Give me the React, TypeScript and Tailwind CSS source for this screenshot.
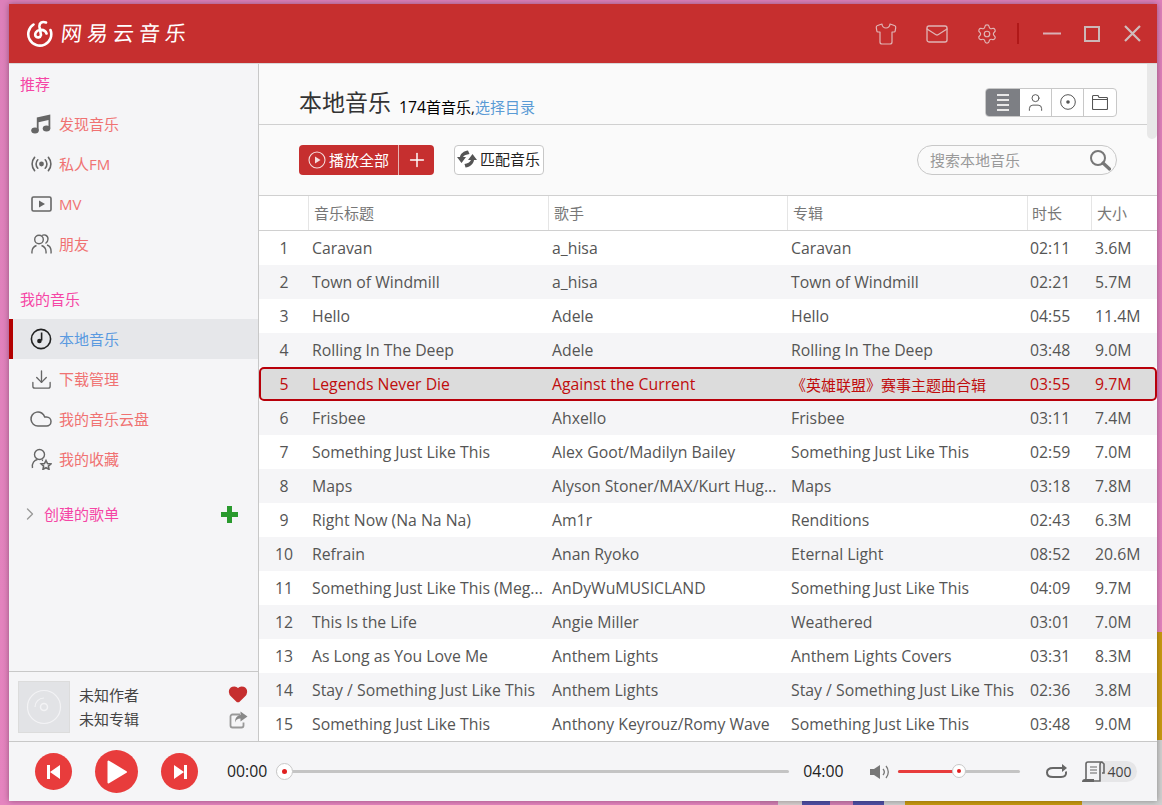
import { Shirt, Mail, Settings, Download, Cloud, ChevronRight, Plus, User, Heart } from "lucide-react";
import type { ReactNode } from "react";

const FONT = "font-['Open_Sans','Noto_Sans_CJK_SC',sans-serif]";

const songs = [
  ["Caravan", "a_hisa", "Caravan", "02:11", "3.6M"],
  ["Town of Windmill", "a_hisa", "Town of Windmill", "02:21", "5.7M"],
  ["Hello", "Adele", "Hello", "04:55", "11.4M"],
  ["Rolling In The Deep", "Adele", "Rolling In The Deep", "03:48", "9.0M"],
  ["Legends Never Die", "Against the Current", "《英雄联盟》赛事主题曲合辑", "03:55", "9.7M"],
  ["Frisbee", "Ahxello", "Frisbee", "03:11", "7.4M"],
  ["Something Just Like This", "Alex Goot/Madilyn Bailey", "Something Just Like This", "02:59", "7.0M"],
  ["Maps", "Alyson Stoner/MAX/Kurt Hug...", "Maps", "03:18", "7.8M"],
  ["Right Now (Na Na Na)", "Am1r", "Renditions", "02:43", "6.3M"],
  ["Refrain", "Anan Ryoko", "Eternal Light", "08:52", "20.6M"],
  ["Something Just Like This (Meg...", "AnDyWuMUSICLAND", "Something Just Like This", "04:09", "9.7M"],
  ["This Is the Life", "Angie Miller", "Weathered", "03:01", "7.0M"],
  ["As Long as You Love Me", "Anthem Lights", "Anthem Lights Covers", "03:31", "8.3M"],
  ["Stay / Something Just Like This", "Anthem Lights", "Stay / Something Just Like This", "02:36", "3.8M"],
  ["Something Just Like This", "Anthony Keyrouz/Romy Wave", "Something Just Like This", "03:48", "9.0M"],
];

const Note = () => (
  <svg width="20" height="20" viewBox="0 0 20 20" fill="#666">
    <ellipse cx="4" cy="16.500" rx="3.800" ry="3" />
    <ellipse cx="15.500" cy="14.500" rx="3.800" ry="3" />
    <path d="M5.800 16.500V3.500L19.300 .5v14h-1.800V6L7.600 8.200v8.300z" />
  </svg>
);

const Radio = () => (
  <svg width="21" height="18" viewBox="0 0 21 18" fill="none" stroke="#666" strokeWidth="1.600" strokeLinecap="round">
    <circle cx="10.500" cy="9" r="2.400" fill="#666" stroke="none" />
    <path d="M6.800 4.800a6 6 0 0 0 0 8.400M14.200 4.800a6 6 0 0 1 0 8.400M3.600 2.400a10 10 0 0 0 0 13.200M17.400 2.400a10 10 0 0 1 0 13.200" />
  </svg>
);

const Mv = () => (
  <svg width="21" height="16" viewBox="0 0 21 16" fill="none">
    <rect x="1" y="1" width="19" height="14" rx="1.500" stroke="#666" strokeWidth="1.600" />
    <path d="M8 4.500l6 3.500-6 3.500z" fill="#666" />
  </svg>
);

const Friends = () => (
  <svg width="21" height="20" viewBox="0 0 21 20" fill="none" stroke="#666" strokeWidth="1.400">
    <circle cx="8" cy="5.500" r="4.300" />
    <path d="M1 19.500c-.5-4.500 1.500-7 4.500-8M10.500 11.500c3 1 5 3.500 4.500 8" />
    <path d="M11 1.500c2-1.200 6-.6 6 3.500 0 2-1 3.500-2.500 4.500M16 11c3 1 4.500 4 4 8.500" />
  </svg>
);

const Clock = () => (
  <svg width="22" height="22" viewBox="0 0 22 22" fill="none" stroke="#222" strokeWidth="1.600">
    <circle cx="11" cy="11" r="9.600" />
    <path d="M11.600 4.500v8" />
    <circle cx="9.400" cy="13" r="2.300" fill="#222" stroke="none" />
  </svg>
);

const UserStar = () => (
  <svg width="21" height="22" viewBox="0 0 21 22" fill="none" stroke="#666" strokeWidth="1.400">
    <circle cx="8.500" cy="6.500" r="5" />
    <path d="M1.500 20c-1-5 2-8 5-8.500M11 12l1 .5" />
    <path d="M15 12.500l1.500 3 3.300.4-2.400 2.200.6 3.200-3-1.600-3 1.600.6-3.200-2.400-2.200 3.300-.4z" strokeWidth="1.600" />
  </svg>
);

const nav1 = [
  { label: "发现音乐", icon: <Note /> },
  { label: "私人FM", icon: <Radio /> },
  { label: "MV", icon: <Mv /> },
  { label: "朋友", icon: <Friends /> },
];

const nav2 = [
  { label: "下载管理", icon: <Download size={23} color="#666" strokeWidth={1.400} /> },
  { label: "我的音乐云盘", icon: <Cloud size={24} color="#666" strokeWidth={1.500} /> },
  { label: "我的收藏", icon: <UserStar /> },
];

function NavItem({ icon, label }: { icon: ReactNode; label: string }) {
  return (
    <div className="flex h-10 items-center">
      <div className="flex w-[50px] justify-end pr-[6px]">
        <div className="flex w-[24px] justify-center">{icon}</div>
      </div>
      <span className="text-[15px] text-[#f07272]">{label}</span>
    </div>
  );
}

function Sidebar() {
  return (
    <aside className="flex w-[250px] shrink-0 flex-col border-r border-[#c8c8c8] bg-[#f5f5f7]">
      <div className="flex-1">
        <div className="pl-[11px] pt-[9px] text-[15px] leading-[22px] text-[#f545a5]">推荐</div>
        <div className="mt-[9px]">
          {nav1.map((n) => (
            <NavItem key={n.label} label={n.label} icon={n.icon} />
          ))}
        </div>
        <div className="pl-[11px] pt-[24px] text-[15px] leading-[22px] text-[#f545a5]">我的音乐</div>
        <div className="mt-[9px] flex h-10 items-center border-l-[4px] border-[#b30000] bg-[#e6e7ea]">
          <div className="flex w-[46px] justify-end pr-[6px]">
            <div className="flex w-[24px] justify-center"><Clock /></div>
          </div>
          <span className="text-[15px] text-[#5a9ae0]">本地音乐</span>
        </div>
        {nav2.map((n) => (
          <NavItem key={n.label} label={n.label} icon={n.icon} />
        ))}
        <div className="mt-[15px] flex h-10 items-center pl-[11px] pr-[20px]">
          <ChevronRight size={20} color="#999" strokeWidth={1.600} className="mr-[4px]" />
          <span className="flex-1 text-[15px] text-[#f545a5]">创建的歌单</span>
          <svg width="17" height="17" viewBox="0 0 17 17" fill="#2a9a2e"><path d="M6 0h5v6h6v5h-6v6H6v-6H0V6h6z" /></svg>
        </div>
      </div>
      <div className="flex h-[70px] items-center border-t border-[#c8c8c8] pl-[9px] pr-[10px]">
        <div className="flex h-[52px] w-[52px] items-center justify-center border border-[#dcdcdc] bg-[#e2e3e6]">
          <svg width="36" height="36" viewBox="0 0 36 36" fill="none" stroke="#f3f3f5" strokeWidth="1.200">
            <circle cx="18" cy="18" r="16.500" />
            <circle cx="18" cy="18" r="3.500" strokeWidth="1.500" />
            <path d="M9 18a9 9 0 0 1 9-9" />
          </svg>
        </div>
        <div className="ml-[9px] flex-1 text-[15px] leading-[24px] text-[#444]">
          <div>未知作者</div>
          <div>未知专辑</div>
        </div>
        <div className="flex flex-col items-center gap-[7px]">
          <Heart size={20} fill="#c62f2f" color="#c62f2f" />
          <svg width="19" height="18" viewBox="0 0 19 18" fill="none">
            <path d="M11 3.500H3.500a2 2 0 0 0-2 2v9a2 2 0 0 0 2 2h9a2 2 0 0 0 2-2v-3" stroke="#999" strokeWidth="1.800" />
            <path d="M11.500 .5l7 5-7 5V7.500c-3 0-4.500 1-5.500 4 0-4.500 2-7 5.500-7.500z" fill="#888" />
          </svg>
        </div>
      </div>
    </aside>
  );
}

function Header() {
  return (
    <div className="bg-[#fafafa]">
      <div className="flex h-[61px] items-center border-b border-[#d0d0d0] pl-[40px] pr-[40px]">
        <span className="pt-[15px] text-[23px] leading-[32px] text-[#333]">本地音乐</span>
        <span className="ml-[8px] pt-[25px] text-[15px] leading-[24px] text-black"><span className="text-[15.800px]">174</span>首音乐,<span className="text-[#5a9bd5]">选择目录</span></span>
        <div className="mt-[16px] ml-auto flex h-[29px] w-[132px] overflow-hidden rounded-[4px] border border-[#c8c8c8] bg-white">
          <div className="flex w-[34px] items-center justify-center bg-[#7d7f84]">
            <div className="flex flex-col gap-[3px]">
              <div className="h-[2px] w-[12px] bg-[#e8e8e8]" />
              <div className="h-[2px] w-[12px] bg-[#e8e8e8]" />
              <div className="h-[2px] w-[12px] bg-[#e8e8e8]" />
              <div className="h-[2px] w-[12px] bg-[#e8e8e8]" />
            </div>
          </div>
          <div className="flex w-[32px] items-center justify-center border-r border-[#c8c8c8]">
            <User size={21} color="#555" strokeWidth={1.100} />
          </div>
          <div className="flex w-[32px] items-center justify-center border-r border-[#c8c8c8]">
            <svg width="16" height="16" viewBox="0 0 16 16" fill="none">
              <circle cx="8" cy="8" r="7.300" stroke="#555" strokeWidth="1" />
              <circle cx="8" cy="8" r="1.800" fill="#555" />
            </svg>
          </div>
          <div className="flex flex-1 items-center justify-center">
            <svg width="16" height="15" viewBox="0 0 16 15" fill="none" stroke="#555" strokeWidth="1.100">
              <path d="M.5 4.500v9a1 1 0 0 0 1 1h13a1 1 0 0 0 1-1v-10a1 1 0 0 0-1-1H7L6 .5H1.500a1 1 0 0 0-1 1zM.5 4.500h15" />
            </svg>
          </div>
        </div>
      </div>
      <div className="flex h-[70px] items-center pl-[40px] pr-[40px]">
        <div className="flex h-[30px] w-[135px] rounded-[4px] bg-[#c62f2f] text-white">
          <div className="flex w-[100px] items-center gap-[3px] border-r border-[#e6b4b4] pl-[9px]">
            <svg width="18" height="18" viewBox="0 0 18 18" fill="none">
              <circle cx="9" cy="9" r="8" stroke="#f5dcdc" strokeWidth="1.100" />
              <path d="M7 5.500l5.500 3.500L7 12.500z" fill="#f5dcdc" />
            </svg>
            <span className="text-[15px]">播放全部</span>
          </div>
          <div className="flex flex-1 items-center justify-center">
            <Plus size={22} strokeWidth={1.600} />
          </div>
        </div>
        <div className="ml-[20px] flex h-[30px] w-[90px] items-center gap-[3px] rounded-[4px] border border-[#c8c8c8] bg-white pl-[2px] pb-[2px]">
          <svg width="20" height="20" viewBox="0 0 20 20" fill="#555">
            <path d="M0 8l4.500 6L9 8H6c1-2 3.500-2.500 6.500-3L11 1.500C7 2 3.500 4.500 3 8z" />
            <path d="M20 11l-4.500-6L11 11h3c-1 2.500-3.500 3.500-6.500 4L8.500 18.500c4.500-.5 8-3.500 8.500-7.500z" />
          </svg>
          <span className="text-[15px] text-[#222]">匹配音乐</span>
        </div>
        <div className="ml-auto flex h-[30px] w-[200px] items-center justify-between rounded-full border border-[#c8c8c8] pl-[12px] pr-[5px]">
          <span className="text-[15px] text-[#999]">搜索本地音乐</span>
          <svg width="22" height="22" viewBox="0 0 22 22" fill="none" stroke="#777">
            <circle cx="9" cy="9" r="7" strokeWidth="2" />
            <path d="M14 14l6.500 6" strokeWidth="3.200" strokeLinecap="round" />
          </svg>
        </div>
      </div>
    </div>
  );
}

const cols = ["w-[50px]", "w-[240px]", "w-[239px]", "w-[240px]", "w-[64px]", "flex-1"];

function SongTable() {
  const heads = ["", "音乐标题", "歌手", "专辑", "时长", "大小"];
  return (
    <div>
      <div className="flex h-[36px] border-y border-[#d0d0d0] bg-white">
        {heads.map((h, i) => (
          <div key={i} className={`${cols[i]} flex items-center ${i === 4 ? "pl-[4px]" : i > 0 ? "pl-[5px]" : ""} ${i < 5 ? "border-r border-[#e5e5e5]" : ""} text-[15px] text-[#777]`}>
            {h}
          </div>
        ))}
      </div>
      {songs.map((s, i) => {
        const active = i === 4;
        return (
          <div
            key={i}
            className={`flex h-[34px] items-center pt-[2px] text-[15.800px] ${active ? "rounded-[5px] border-2 border-[#b8000a] bg-[#dcdcdc] text-[#c00d0d]" : i % 2 === 0 ? "bg-white text-[#555]" : "bg-[#f5f5f7] text-[#555]"}`}
          >
            <div className={`${active ? "w-[48px] pr-[2px]" : "w-[50px]"} text-center`}>
              <span className="inline-block w-[20px] text-center">{i + 1}</span>
            </div>
            {s.map((v, j) => (
              <div key={j} className={`${cols[j + 1]} whitespace-nowrap ${j === 3 ? "pl-[2px]" : "pl-[3px]"} ${j === 2 && active ? "text-[15px]" : ""}`}>
                {v}
              </div>
            ))}
          </div>
        );
      })}
    </div>
  );
}

function Player() {
  return (
    <div className="flex h-[60px] shrink-0 items-center border-t border-[#c8c8c8] bg-[#f5f5f7] pl-[26px] pr-[20px]">
      <div className="flex h-[37px] w-[37px] items-center justify-center rounded-full bg-[#e83c3c]">
        <svg width="14" height="14" viewBox="0 0 14 14" fill="#fff"><path d="M0 0h3v14H0zM13 0v14L3 7z" /></svg>
      </div>
      <div className="ml-[23px] flex h-[43px] w-[43px] items-center justify-center rounded-full bg-[#e83c3c]">
        <svg width="20" height="24" viewBox="0 0 20 24" fill="#fff" className="ml-[1px]"><path d="M1.500 1.500v21L19 12z" stroke="#fff" strokeWidth="2" strokeLinejoin="round" /></svg>
      </div>
      <div className="ml-[23px] flex h-[37px] w-[37px] items-center justify-center rounded-full bg-[#e83c3c]">
        <svg width="14" height="14" viewBox="0 0 14 14" fill="#fff"><path d="M14 0h-3v14h3zM1 0v14l10-7z" /></svg>
      </div>
      <span className="ml-[29px] text-[15.800px] text-[#222]">00:00</span>
      <div className="relative ml-[9px] h-[3px] w-[513px] rounded bg-[#c4c4c4]">
        <div className="absolute -top-[7px] left-0 flex h-[17px] w-[17px] items-center justify-center rounded-full border border-[#c8c8c8] bg-white">
          <div className="h-[5px] w-[5px] rounded-full bg-[#e02020]" />
        </div>
      </div>
      <span className="ml-[14px] text-[15.800px] text-[#222]">04:00</span>
      <svg width="20" height="18" viewBox="0 0 20 18" fill="none" className="ml-[26px]">
        <path d="M0 6h4l6-4v14l-6-4H0z" fill="#777" />
        <path d="M13 6a4.500 4.500 0 0 1 0 6M16 3a9 9 0 0 1 0 12" stroke="#777" strokeWidth="1.300" />
      </svg>
      <div className="relative ml-[8px] h-[3px] w-[122px] rounded bg-[#c4c4c4]">
        <div className="h-[3px] w-[60px] rounded bg-[#e83c3c]" />
        <div className="absolute -top-[6px] left-[54px] flex h-[14px] w-[14px] items-center justify-center rounded-full border border-[#c8c8c8] bg-white">
          <div className="h-[4px] w-[4px] rounded-full bg-[#e02020]" />
        </div>
      </div>
      <svg width="22" height="17" viewBox="0 0 22 17" fill="none" className="ml-[26px]">
        <path d="M20 8.500c.5 3.500-1 5.500-5 5.500H7C2.500 14 1 12 1 9.500S2.500 5 7 5h12" stroke="#666" strokeWidth="2" />
        <path d="M16 1l5 4-5 4z" fill="#666" />
      </svg>
      <div className="ml-[13px] flex items-center">
        <svg width="24" height="22" viewBox="0 0 24 22" fill="none" className="relative z-10">
          <path d="M7 1h14l2 2v9h-2M7 1c-1 0-2 1-2 2v14c0 2-1 3-1 3h15V4c0-2 1-3 2-3" stroke="#666" strokeWidth="1.600" />
          <path d="M1 21c0-2 1-3 3-3h9v3z" fill="#666" />
          <path d="M9 6h7M9 9h7M9 12h7" stroke="#666" strokeWidth="1.200" />
        </svg>
        <div className="-ml-[4px] flex h-[21px] w-[36px] items-center justify-center rounded-r-full bg-[#e6e6e8] pl-[2px] text-[14px] text-[#444]">400</div>
      </div>
    </div>
  );
}

export default function App() {
  return (
    <div className={`${FONT} relative h-[805px] w-[1162px] overflow-hidden bg-gradient-to-b from-[#dd80ba] to-[#e584bf] pl-[9px] pt-[4px]`}>
      {/* wallpaper pieces showing round the window */}
      <div className="absolute right-0 top-[632px] h-[108px] w-[5px] bg-[#c99a10]" />
      <div className="absolute bottom-0 right-0 h-[65px] w-[5px] bg-[#d0d0d0]" />
      <div className="absolute bottom-0 left-[760px] flex h-[4px] w-[402px]">
        <div className="w-[18px] bg-[#d47fb4]" />
        <div className="w-[24px] bg-[#d8d0d0]" />
        <div className="w-[28px] bg-[#4f4fa5]" />
        <div className="w-[23px] bg-[#d47fb4]" />
        <div className="w-[31px] bg-[#4f4fa5]" />
        <div className="w-[21px] bg-[#d0d0d0]" />
        <div className="w-[177px] bg-[#c99a10]" />
        <div className="flex-1 bg-[#d0d0d0]" />
      </div>

      <div className="relative flex h-[797px] w-[1148px] flex-col shadow-[0_0_6px_rgba(0,0,0,0.35)]">
        <header className="flex h-[60px] shrink-0 items-center border-b border-[#d8d8d8] bg-[#c62f2f] pl-[17px] pr-[16px]">
          <svg width="27" height="27" viewBox="0 0 27 27" fill="none" stroke="#fff" strokeWidth="2.600" strokeLinecap="round">
            <path d="M7.500 4.500A11.500 11.500 0 1 0 24.500 10" />
            <path d="M20 2.500c-4-1.500-7 .5-6.500 4.500l1.500 8a3 3 0 0 1-5.500 1c-1-2.500 1-5.500 4-6 3-.5 6 .5 7 3.500" />
          </svg>
          <span className="ml-[8px] -skew-x-6 text-[21px] tracking-[5px] text-white">网易云音乐</span>
          <div className="ml-auto flex items-center">
            <Shirt size={24} color="#e0b5b5" strokeWidth={1.200} />
            <Mail size={24} color="#e0b5b5" strokeWidth={1.300} className="ml-[27px]" />
            <Settings size={22} color="#e0b5b5" strokeWidth={1.300} className="ml-[27px]" />
            <div className="ml-[19px] h-[21px] w-[2px] bg-[#b01818]" />
            <svg width="18" height="3" viewBox="0 0 18 3" fill="#d9b0b5" className="ml-[24px]"><rect width="18" height="2" y=".5" /></svg>
            <svg width="16" height="16" viewBox="0 0 16 16" fill="none" stroke="#ccb8b8" strokeWidth="2" className="ml-[23px]"><rect x="1" y="1" width="14" height="14" /></svg>
            <svg width="17" height="17" viewBox="0 0 17 17" fill="none" stroke="#d0bcbc" strokeWidth="2.200" className="ml-[24px]"><path d="M1 1l15 15M16 1L1 16" /></svg>
          </div>
        </header>

        <div className="flex min-h-0 flex-1">
          <Sidebar />
          <main className="relative min-w-0 flex-1 overflow-hidden bg-white">
            <Header />
            <SongTable />
            <div className="absolute right-0 top-0 h-[75px] w-[10px] rounded-b-full bg-[#e8e8e8]" />
          </main>
        </div>

        <Player />
      </div>
    </div>
  );
}
